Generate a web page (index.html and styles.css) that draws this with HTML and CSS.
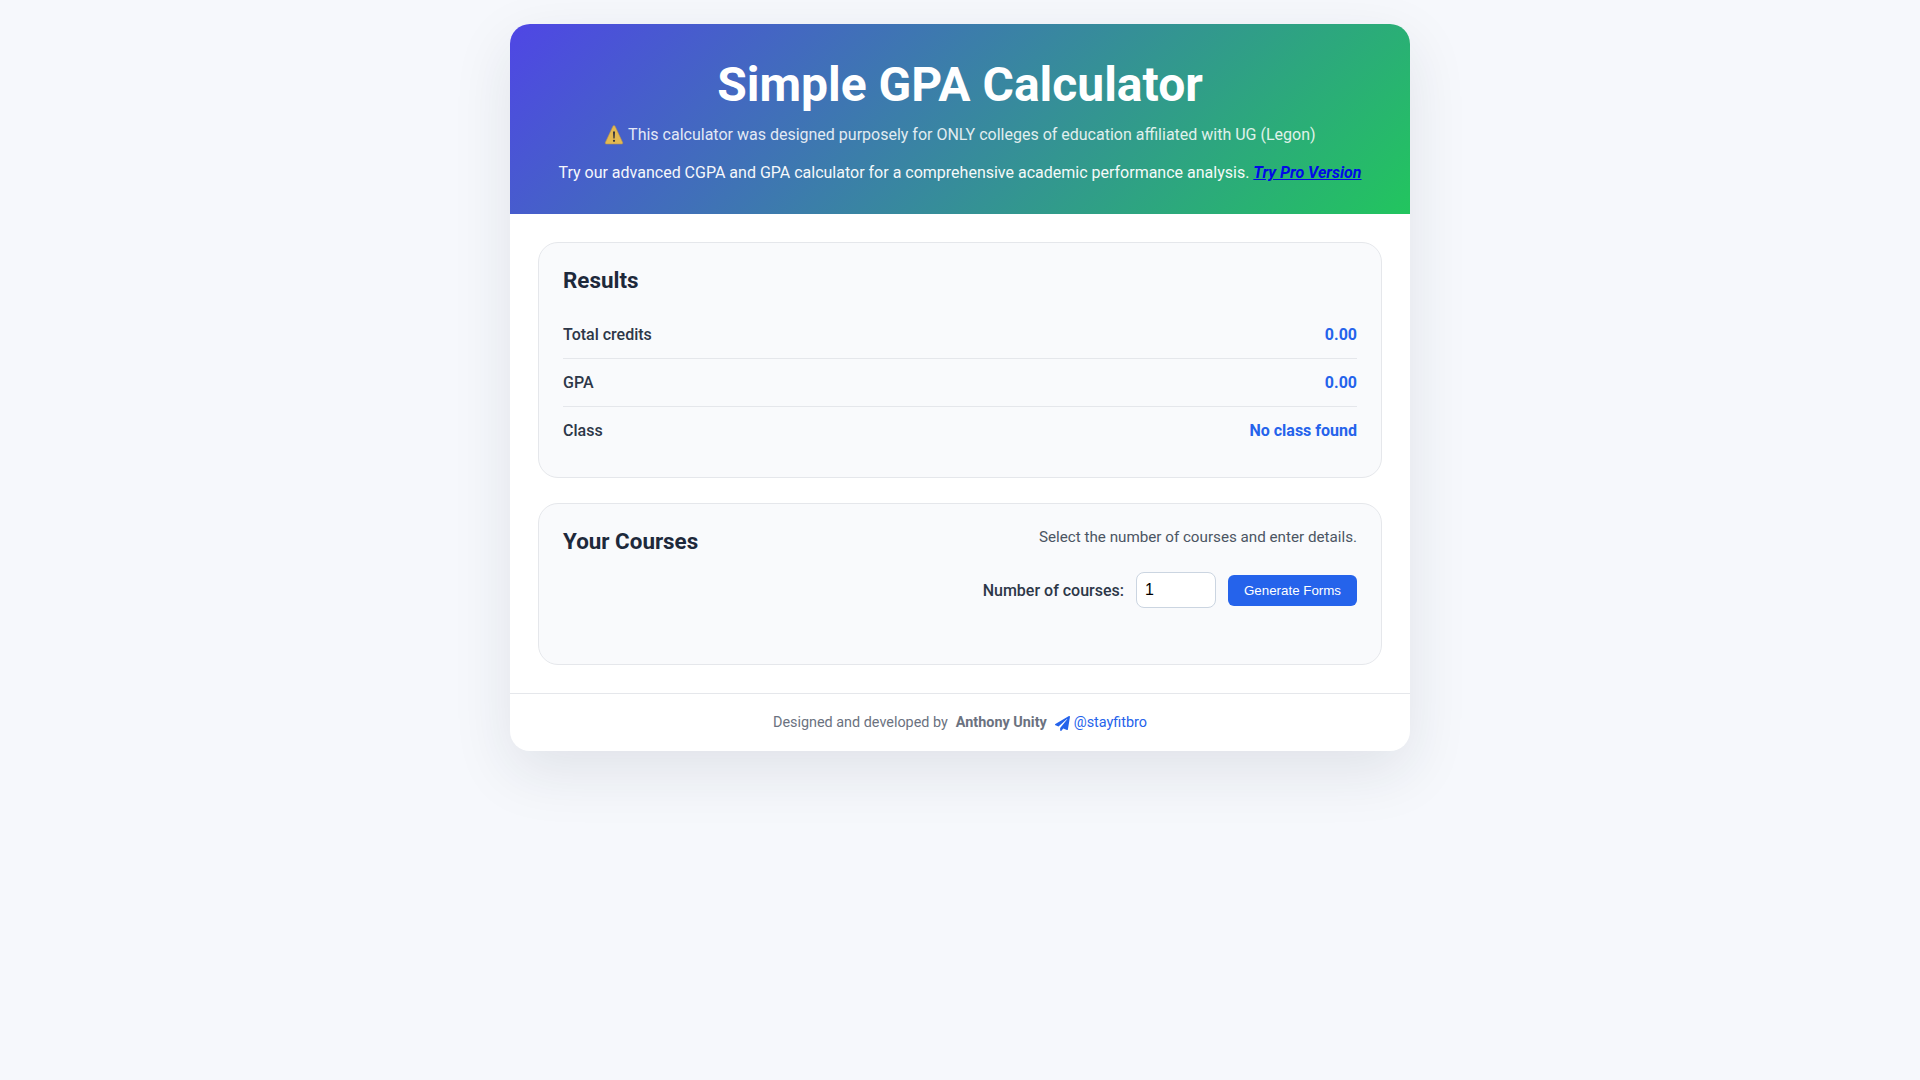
FILE: index.html
```html
<!DOCTYPE html>
<html lang="en">
  <head>
    <meta charset="utf-8">
    <title>Simple GPA Calculator</title>
    <link rel="stylesheet" href="styles.css">
  </head>
  <body>
    <div class="container">
      <header class="header">
        <h1>Simple GPA Calculator</h1>
        <p class="notice">
          <svg class="warn" viewBox="0 0 20 20" width="20" height="20"><path d="M10 .6c.5 0 .9.3 1.200.8l7.500 16.200c.3.700-.1 1.400-.9 1.400H2.200c-.8 0-1.200-.7-.9-1.400L8.800 1.400c.3-.5.700-.8 1.200-.8z" fill="#ffc93c" stroke="#c89a3c" stroke-width=".6"/><path d="M9 6.500h2l-.4 7h-1.200z" fill="#2f2a24"/><circle cx="10" cy="15.800" r="1.100" fill="#2f2a24"/></svg>
          This calculator was designed purposely for ONLY colleges of education affiliated with UG (Legon)
        </p>
        <p class="promo">Try our advanced CGPA and GPA calculator for a comprehensive academic performance analysis. <a href="#">Try Pro Version</a></p>
      </header>

      <main class="content">
        <section class="panel results">
          <h2>Results</h2>
          <div class="row"><span>Total credits</span><strong>0.00</strong></div>
          <div class="row"><span>GPA</span><strong>0.00</strong></div>
          <div class="row"><span>Class</span><strong>No class found</strong></div>
        </section>

        <section class="panel courses">
          <div class="courses_head">
            <h2>Your Courses</h2>
            <div class="courses_side">
              <p>Select the number of courses and enter details.</p>
              <div class="controls">
                <label for="count">Number of courses:</label>
                <input id="count" type="number" value="1">
                <button type="button">Generate Forms</button>
              </div>
            </div>
          </div>
        </section>
      </main>

      <footer class="footer">
        <span>Designed and developed by</span>
        <b>Anthony Unity</b>
        <a href="#"><svg class="plane" viewBox="0 0 512 512" width="15" height="15"><path d="M476 3.200 12.500 270.600c-18.100 10.400-15.800 35.600 2.200 43.200L121 358.400l287.300-253.200c5.500-4.900 13.300 2.600 8.600 8.300L176 407v80.500c0 23.600 28.500 32.900 42.500 15.800L282 426l124.600 52.200c14.200 6 30.400-2.900 33-18.200l72-432C515 7.800 493.300-6.800 476 3.200z" fill="#2563eb"/></svg>@stayfitbro</a>
      </footer>
    </div>
  </body>
</html>
```

FILE: styles.css
```css
html, body {
  margin: 0; padding: 0;
}

body {
  background: #f6f8fc;
  font-family: Roboto, "Liberation Sans", sans-serif;
  color: #1f2937;
  min-height: 100vh;
}

.container {
  width: 900px;
  margin: 24px auto 0;
  background: #fff;
  border-radius: 20px;
  overflow: hidden;
  box-shadow: 0 20px 60px rgba(31, 41, 55, 0.1);
}

.header {
  height: 190px;
  box-sizing: border-box;
  padding: 33px 32px 0;
  text-align: center;
  color: #fff;
  background: linear-gradient(135deg, #4f46e5, #22c55e);
}

.header h1 {
  margin: 0;
  font-size: 48px;
  line-height: 56px;
  font-weight: 700;
}

.header p {
  margin: 0;
  font-size: 16px;
  line-height: 24px;
}

.notice {
  margin-top: 10px !important;
  opacity: 0.85;
}

.warn {
  vertical-align: -5px;
}

.promo {
  margin-top: 14px !important;
  opacity: 0.95;
}

.promo a {
  color: #0000ee;
  font-weight: 700;
  font-style: italic;
}

.content {
  padding: 28px;
  display: flex;
  flex-direction: column;
  gap: 25px;
}

.panel {
  background: #f9fafc;
  border: 1px solid #e5e7eb;
  border-radius: 20px;
  padding: 24px;
}

.panel h2 {
  margin: 0;
  font-size: 22.4px;
  line-height: 27px;
  font-weight: 700;
  color: #1e293b;
}

.results {
  height: 236px;
  box-sizing: border-box;
}

.results h2 {
  margin-bottom: 17px;
}

.row {
  display: flex;
  justify-content: space-between;
  align-items: center;
  height: 47px;
  font-size: 16px;
  font-weight: 500;
  color: #2d3748;
  border-bottom: 1px solid #e5e7eb;
}

.row:last-child {
  border-bottom: 0;
}

.row strong {
  color: #2563eb;
  font-weight: 700;
}

.courses {
  height: 162px;
  box-sizing: border-box;
}

.courses_head {
  display: flex;
  justify-content: space-between;
  align-items: flex-start;
}

.courses_side {
  display: flex;
  flex-direction: column;
  align-items: flex-end;
}

.courses_side p {
  margin: 0;
  font-size: 15.2px;
  line-height: 18px;
  color: #4b5563;
}

.controls {
  display: flex;
  align-items: center;
  gap: 12px;
  margin-top: 26px;
}

.controls label {
  font-size: 16px;
  font-weight: 500;
  color: #2d3748;
}

.controls input {
  width: 80px;
  height: 36px;
  box-sizing: border-box;
  padding: 0 8px;
  border: 1px solid #cbd5e1;
  border-radius: 8px;
  background: #fff;
  font-family: "Liberation Sans", sans-serif;
  font-size: 16px;
}

.controls button {
  width: 129px;
  height: 31px;
  border: 0;
  border-radius: 6px;
  background: #2563eb;
  color: #fff;
  font-family: "Liberation Sans", sans-serif;
  font-size: 13.333px;
}

.footer {
  height: 58px;
  box-sizing: border-box;
  padding-bottom: 1px;
  border-top: 1px solid #e5e7eb;
  display: flex;
  justify-content: center;
  align-items: center;
  gap: 8px;
  font-size: 14.4px;
  color: #6b7280;
}

.footer a {
  color: #2563eb;
  text-decoration: none;
  display: flex;
  align-items: center;
  gap: 4px;
}

.plane {
  margin-top: 3px;
}
```
